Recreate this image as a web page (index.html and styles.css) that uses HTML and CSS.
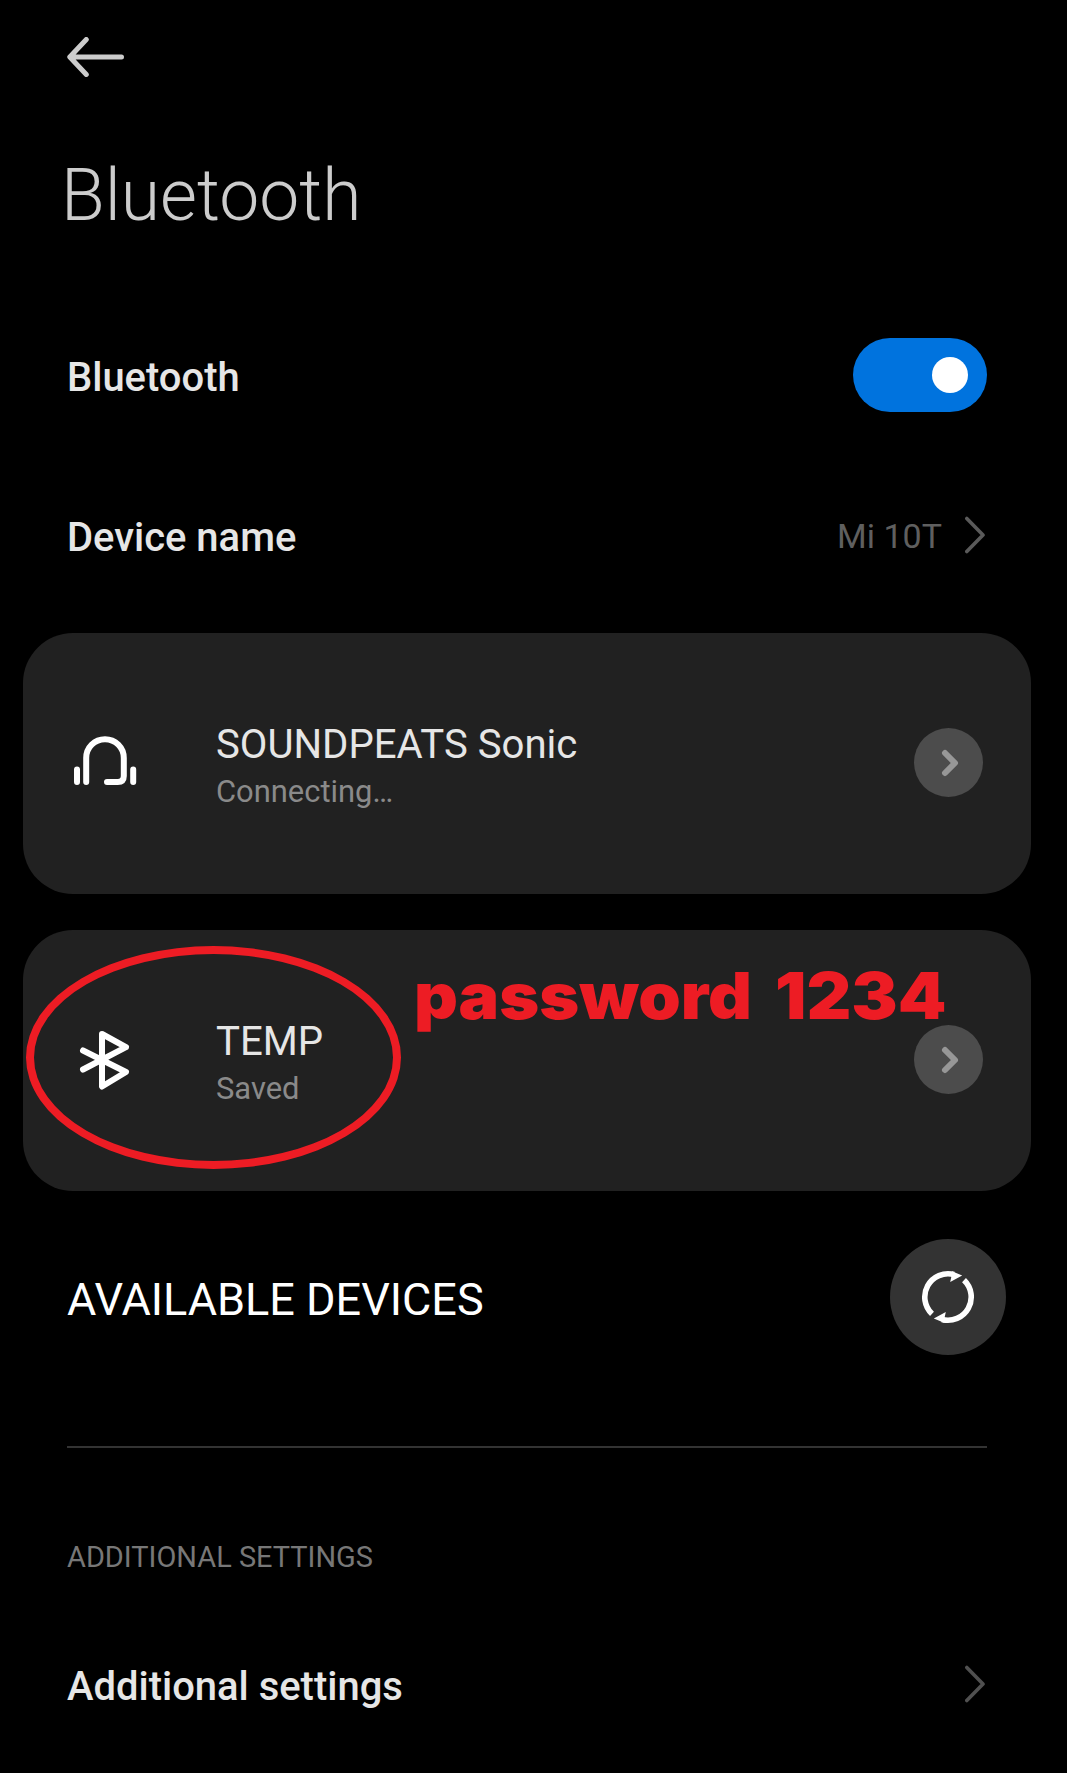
FILE: index.html
```html
<!DOCTYPE html>
<html lang="en">
<head>
<meta charset="utf-8">
<title>Bluetooth</title>
<link rel="stylesheet" href="styles.css">
</head>
<body>
<main class="screen">
  <header class="topbar">
    <svg class="back" width="58" height="40" viewBox="0 0 58 40"><path d="M19.300 2.500 2.800 20l16.500 17.500M3.500 20H54.500"/></svg>
  </header>
  <h1 class="title">Bluetooth</h1>

  <div class="row row-power">
    <span class="label">Bluetooth</span>
    <span class="toggle"><span class="knob"></span></span>
  </div>
  <div class="row row-name">
    <span class="label">Device name</span>
    <span class="value">Mi 10T</span>
    <svg class="chevron" width="22" height="38" viewBox="0 0 22 38"><path d="M1.800 2.500 18 19 1.800 35.500"/></svg>
  </div>

  <section class="devices">
    <article class="card">
      <svg class="device-icon" width="66" height="60" viewBox="0 0 66 60">
        <path d="M6 35.500v12.500M62.200 35.500v12.500M15.200 48V24a18.800 18.800 0 0 1 37.600 0V42q0 6-6 6H36"/>
      </svg>
      <div class="info">
        <span class="name">SOUNDPEATS Sonic</span>
        <span class="status">Connecting…</span>
      </div>
      <span class="more"><svg width="22" height="30" viewBox="0 0 22 30"><path d="m7 5 10 10L7 25"/></svg></span>
    </article>
    <article class="card">
      <svg class="device-icon" width="66" height="60" viewBox="0 0 66 60">
        <path d="m12 19.500 43 21.500-24 14.500V3l24 13.200L12 38.500"/>
      </svg>
      <div class="info">
        <span class="name">TEMP</span>
        <span class="status">Saved</span>
      </div>
      <span class="more"><svg width="22" height="30" viewBox="0 0 22 30"><path d="m7 5 10 10L7 25"/></svg></span>
      <span class="ring"></span>
      <span class="note"><span class="note-word">password</span> <span class="note-code">1234</span></span>
    </article>
  </section>

  <div class="row row-available">
    <h2 class="heading">AVAILABLE DEVICES</h2>
    <span class="refresh">
      <svg width="60" height="60" viewBox="0 0 60 60">
        <path class="arc" d="M14 46.900A23.300 23.300 0 0 1 36 7.500M46 13.100A23.300 23.300 0 0 1 24 52.500"/>
        <path class="head" d="M34 4.300 44.200 8.400 32.200 15l1.300-6zM26 55.700 15.800 51.600 27.800 45l-1.300 6z"/>
      </svg>
    </span>
  </div>
  <hr class="divider">
  <h3 class="section">ADDITIONAL SETTINGS</h3>
  <div class="row row-more">
    <span class="label">Additional settings</span>
    <svg class="chevron dim" width="22" height="38" viewBox="0 0 22 38"><path d="M1.800 2.500 18 19 1.800 35.500"/></svg>
  </div>
</main>
</body>
</html>
```
FILE: styles.css
```css
* { box-sizing: border-box; }
body {
  margin: 0;
  background: #000;
  color: #e6e6e6;
  font-family: Roboto, "Liberation Sans", sans-serif;
}
svg { display: block; fill: none; stroke-linecap: round; stroke-linejoin: round; flex: none; }
h1, h2, h3 { margin: 0; font-weight: 400; }

.screen { width: 1067px; height: 1773px; overflow: hidden; }
.topbar { height: 115px; display: flex; align-items: center; padding: 0 0 1px 67px; }
.back { stroke: #ccc; stroke-width: 5; }
.title {
  height: 162px;
  padding-left: 61px;
  line-height: 162px;
  font-size: 71.400px;
  font-weight: 300;
  color: #ccc;
}

.row { display: flex; align-items: center; padding: 0 80px 0 67px; }
.row-power { height: 196px; }
.row-name { height: 124px; }
.row-available { height: 212px; padding-right: 61px; }
.row-more { height: 178px; margin-top: 18px; }
.label { flex: 1; padding-top: 4px; font-size: 39.950px; font-weight: 500; }
.value { padding-top: 1px; font-size: 34px; color: #5f5f5f; }
.chevron { margin-left: 23px; stroke: #5a5a5a; stroke-width: 3.600; }
.dim { stroke: #505050; }

.toggle {
  width: 134px;
  height: 74px;
  padding-right: 19px;
  border-radius: 37px;
  background: #0073de;
  display: flex;
  align-items: center;
  justify-content: flex-end;
}
.knob { width: 36px; height: 36px; border-radius: 50%; background: #fff; }

.devices { display: grid; gap: 36px; margin: 36px 36px 0 23px; }
.card {
  position: relative;
  height: 261px;
  padding: 0 48px;
  border-radius: 50px;
  background: #212121;
  display: flex;
  align-items: center;
}
.device-icon { stroke: #fff; stroke-width: 6; }
.info { flex: 1; display: grid; padding: 9px 0 0 79px; }
.name, .status { line-height: 47px; }
.name { font-size: 40.150px; }
.status { font-size: 30.900px; color: #8a8a8a; }
.more {
  width: 69px;
  height: 69px;
  margin-bottom: 2px;
  border-radius: 50%;
  background: #4c4c4c;
  display: grid;
  place-items: center;
}
.more svg { stroke: #979797; stroke-width: 6; }

.ring {
  position: absolute;
  left: 3px;
  top: 16px;
  width: 375px;
  height: 223px;
  border: 8px solid #ed1c24;
  border-radius: 50%;
}
.note {
  position: absolute;
  left: 391px;
  top: 26px;
  font: 900 64px/80px Inter, "Liberation Sans", sans-serif;
  color: #ed1c24;
  white-space: nowrap;
}
/* widened letterforms */
.note-word, .note-code { display: inline-block; transform-origin: left; }
.note-word { transform: scaleX(1.063); }
.note-code { margin-left: 30px; transform: scaleX(1.085); }

.heading { flex: 1; padding-top: 4px; font-size: 45px; color: #fff; }
.refresh {
  width: 116px;
  height: 116px;
  border-radius: 50%;
  background: #333;
  display: grid;
  place-items: center;
}
.arc { stroke: #fff; stroke-width: 5.600; stroke-linecap: butt; }
.head { fill: #fff; }
.divider { height: 2px; margin: 43px 80px 0 67px; border: 0; background: #333; }
.section {
  margin: 89px 0 0 67px;
  font-size: 28.950px;
  line-height: 40px;
  color: #777;
}
```
